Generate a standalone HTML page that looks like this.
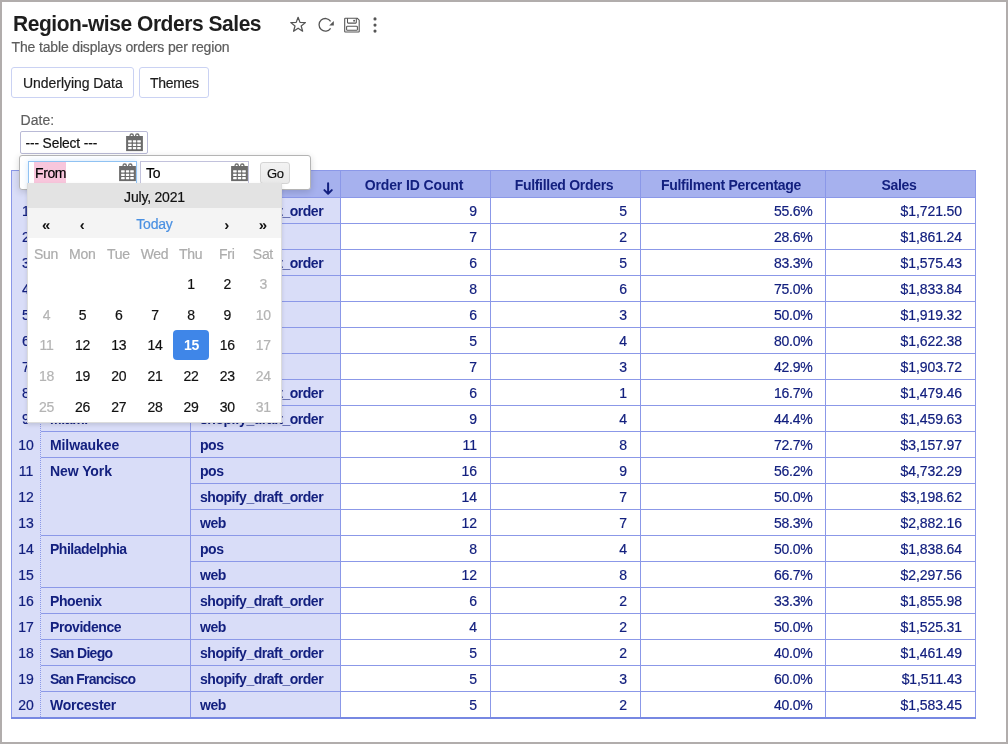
<!DOCTYPE html>
<html><head><meta charset="utf-8"><style>
html,body{margin:0;padding:0;}
body{width:1008px;height:744px;position:relative;overflow:hidden;background:#fff;font-family:"Liberation Sans", sans-serif;}
.t{position:absolute;white-space:nowrap;}
.n{-webkit-text-stroke:0.2px currentColor;}
.r{position:absolute;}
#wrap{position:absolute;left:0;top:0;width:1008px;height:744px;will-change:transform;}
#frame{position:absolute;left:0;top:0;width:1008px;height:744px;box-sizing:border-box;border:2px solid #b1adac;pointer-events:none;z-index:99;}
</style></head><body>
<div id="wrap">
<div class="r" style="left:11px;top:170px;width:964px;height:547px;background:#fff;"></div>
<div class="r" style="left:11px;top:170px;width:179px;height:547px;background:#d9ddf8;"></div>
<div class="r" style="left:190px;top:197px;width:150px;height:520px;background:#d9ddf8;"></div>
<div class="r" style="left:40px;top:170px;width:935px;height:27px;background:#a6b1ee;"></div>
<div class="r" style="left:11px;top:170px;width:965px;height:1px;background:#8b98e8;"></div>
<div class="r" style="left:41px;top:197px;width:935px;height:1px;background:#8b98e8;"></div>
<div class="r" style="left:41px;top:223px;width:935px;height:1px;background:#8b98e8;"></div>
<div class="r" style="left:41px;top:249px;width:935px;height:1px;background:#8b98e8;"></div>
<div class="r" style="left:41px;top:275px;width:935px;height:1px;background:#8b98e8;"></div>
<div class="r" style="left:41px;top:301px;width:935px;height:1px;background:#8b98e8;"></div>
<div class="r" style="left:41px;top:327px;width:935px;height:1px;background:#8b98e8;"></div>
<div class="r" style="left:41px;top:353px;width:935px;height:1px;background:#8b98e8;"></div>
<div class="r" style="left:41px;top:379px;width:935px;height:1px;background:#8b98e8;"></div>
<div class="r" style="left:41px;top:405px;width:935px;height:1px;background:#8b98e8;"></div>
<div class="r" style="left:41px;top:431px;width:935px;height:1px;background:#8b98e8;"></div>
<div class="r" style="left:41px;top:457px;width:935px;height:1px;background:#8b98e8;"></div>
<div class="r" style="left:190px;top:483px;width:786px;height:1px;background:#8b98e8;"></div>
<div class="r" style="left:190px;top:509px;width:786px;height:1px;background:#8b98e8;"></div>
<div class="r" style="left:41px;top:535px;width:935px;height:1px;background:#8b98e8;"></div>
<div class="r" style="left:190px;top:561px;width:786px;height:1px;background:#8b98e8;"></div>
<div class="r" style="left:41px;top:587px;width:935px;height:1px;background:#8b98e8;"></div>
<div class="r" style="left:41px;top:613px;width:935px;height:1px;background:#8b98e8;"></div>
<div class="r" style="left:41px;top:639px;width:935px;height:1px;background:#8b98e8;"></div>
<div class="r" style="left:41px;top:665px;width:935px;height:1px;background:#8b98e8;"></div>
<div class="r" style="left:41px;top:691px;width:935px;height:1px;background:#8b98e8;"></div>
<div class="r" style="left:11px;top:717px;width:965px;height:2px;background:#7788e2;"></div>
<div class="r" style="left:11px;top:170px;width:1px;height:547px;background:#8b98e8;"></div>
<div class="r" style="left:975px;top:170px;width:1px;height:547px;background:#8b98e8;"></div>
<div class="r" style="left:190px;top:170px;width:1px;height:547px;background:#8b98e8;"></div>
<div class="r" style="left:340px;top:170px;width:1px;height:547px;background:#8b98e8;"></div>
<div class="r" style="left:490px;top:170px;width:1px;height:547px;background:#8b98e8;"></div>
<div class="r" style="left:640px;top:170px;width:1px;height:547px;background:#8b98e8;"></div>
<div class="r" style="left:825px;top:170px;width:1px;height:547px;background:#8b98e8;"></div>
<div class="r" style="left:40px;top:170px;width:0;height:547px;border-left:1px dotted #8b98e8;"></div>
<div class="t" style="left:339.5px;top:178.15px;font-size:14px;line-height:14px;color:#13207f;font-weight:bold;letter-spacing:-0.12px;width:149px;text-align:center;">Order ID Count</div>
<div class="t" style="left:489.5px;top:178.15px;font-size:14px;line-height:14px;color:#13207f;font-weight:bold;letter-spacing:-0.3px;width:149px;text-align:center;">Fulfilled Orders</div>
<div class="t" style="left:639px;top:178.15px;font-size:14px;line-height:14px;color:#13207f;font-weight:bold;letter-spacing:-0.3px;width:184px;text-align:center;">Fulfilment Percentage</div>
<div class="t" style="left:824.5px;top:178.15px;font-size:14px;line-height:14px;color:#13207f;font-weight:bold;letter-spacing:-0.3px;width:149px;text-align:center;">Sales</div>
<svg class="r" style="left:322px;top:181px" width="12" height="15" viewBox="0 0 12 15"><path d="M6.1 2.2V12.6M2.4 9.1L6.1 12.7L9.8 9.1" fill="none" stroke="#13207f" stroke-width="2" stroke-linecap="round" stroke-linejoin="round"/></svg>
<div class="t n" style="left:12px;top:204.15px;font-size:14px;line-height:14px;color:#13207f;width:28px;text-align:center;">1</div>
<div class="t" style="left:50px;top:204.15px;font-size:14px;line-height:14px;color:#13207f;font-weight:bold;letter-spacing:-0.4px;">Arlington</div>
<div class="t" style="left:200px;top:204.15px;font-size:14px;line-height:14px;color:#13207f;font-weight:bold;letter-spacing:-0.48px;">shopify_draft_order</div>
<div class="t n" style="left:342px;top:204.15px;font-size:14px;line-height:14px;color:#13207f;width:135px;text-align:right;">9</div>
<div class="t n" style="left:492px;top:204.15px;font-size:14px;line-height:14px;color:#13207f;width:135px;text-align:right;">5</div>
<div class="t n" style="left:641.5px;top:204.15px;font-size:14px;line-height:14px;color:#13207f;letter-spacing:-0.25px;width:171px;text-align:right;">55.6%</div>
<div class="t n" style="left:827px;top:204.15px;font-size:14px;line-height:14px;color:#13207f;letter-spacing:-0.1px;width:135px;text-align:right;">$1,721.50</div>
<div class="t n" style="left:12px;top:230.15px;font-size:14px;line-height:14px;color:#13207f;width:28px;text-align:center;">2</div>
<div class="t" style="left:50px;top:230.15px;font-size:14px;line-height:14px;color:#13207f;font-weight:bold;letter-spacing:-0.4px;">Atlanta</div>
<div class="t" style="left:200px;top:230.15px;font-size:14px;line-height:14px;color:#13207f;font-weight:bold;letter-spacing:-0.45px;">pos</div>
<div class="t n" style="left:342px;top:230.15px;font-size:14px;line-height:14px;color:#13207f;width:135px;text-align:right;">7</div>
<div class="t n" style="left:492px;top:230.15px;font-size:14px;line-height:14px;color:#13207f;width:135px;text-align:right;">2</div>
<div class="t n" style="left:641.5px;top:230.15px;font-size:14px;line-height:14px;color:#13207f;letter-spacing:-0.25px;width:171px;text-align:right;">28.6%</div>
<div class="t n" style="left:827px;top:230.15px;font-size:14px;line-height:14px;color:#13207f;letter-spacing:-0.1px;width:135px;text-align:right;">$1,861.24</div>
<div class="t n" style="left:12px;top:256.15px;font-size:14px;line-height:14px;color:#13207f;width:28px;text-align:center;">3</div>
<div class="t" style="left:50px;top:256.15px;font-size:14px;line-height:14px;color:#13207f;font-weight:bold;letter-spacing:-0.4px;">Austin</div>
<div class="t" style="left:200px;top:256.15px;font-size:14px;line-height:14px;color:#13207f;font-weight:bold;letter-spacing:-0.48px;">shopify_draft_order</div>
<div class="t n" style="left:342px;top:256.15px;font-size:14px;line-height:14px;color:#13207f;width:135px;text-align:right;">6</div>
<div class="t n" style="left:492px;top:256.15px;font-size:14px;line-height:14px;color:#13207f;width:135px;text-align:right;">5</div>
<div class="t n" style="left:641.5px;top:256.15px;font-size:14px;line-height:14px;color:#13207f;letter-spacing:-0.25px;width:171px;text-align:right;">83.3%</div>
<div class="t n" style="left:827px;top:256.15px;font-size:14px;line-height:14px;color:#13207f;letter-spacing:-0.1px;width:135px;text-align:right;">$1,575.43</div>
<div class="t n" style="left:12px;top:282.15px;font-size:14px;line-height:14px;color:#13207f;width:28px;text-align:center;">4</div>
<div class="t" style="left:50px;top:282.15px;font-size:14px;line-height:14px;color:#13207f;font-weight:bold;letter-spacing:-0.4px;">Boston</div>
<div class="t" style="left:200px;top:282.15px;font-size:14px;line-height:14px;color:#13207f;font-weight:bold;letter-spacing:-0.5px;">web</div>
<div class="t n" style="left:342px;top:282.15px;font-size:14px;line-height:14px;color:#13207f;width:135px;text-align:right;">8</div>
<div class="t n" style="left:492px;top:282.15px;font-size:14px;line-height:14px;color:#13207f;width:135px;text-align:right;">6</div>
<div class="t n" style="left:641.5px;top:282.15px;font-size:14px;line-height:14px;color:#13207f;letter-spacing:-0.25px;width:171px;text-align:right;">75.0%</div>
<div class="t n" style="left:827px;top:282.15px;font-size:14px;line-height:14px;color:#13207f;letter-spacing:-0.1px;width:135px;text-align:right;">$1,833.84</div>
<div class="t n" style="left:12px;top:308.15px;font-size:14px;line-height:14px;color:#13207f;width:28px;text-align:center;">5</div>
<div class="t" style="left:50px;top:308.15px;font-size:14px;line-height:14px;color:#13207f;font-weight:bold;letter-spacing:-0.4px;">Chicago</div>
<div class="t" style="left:200px;top:308.15px;font-size:14px;line-height:14px;color:#13207f;font-weight:bold;letter-spacing:-0.45px;">pos</div>
<div class="t n" style="left:342px;top:308.15px;font-size:14px;line-height:14px;color:#13207f;width:135px;text-align:right;">6</div>
<div class="t n" style="left:492px;top:308.15px;font-size:14px;line-height:14px;color:#13207f;width:135px;text-align:right;">3</div>
<div class="t n" style="left:641.5px;top:308.15px;font-size:14px;line-height:14px;color:#13207f;letter-spacing:-0.25px;width:171px;text-align:right;">50.0%</div>
<div class="t n" style="left:827px;top:308.15px;font-size:14px;line-height:14px;color:#13207f;letter-spacing:-0.1px;width:135px;text-align:right;">$1,919.32</div>
<div class="t n" style="left:12px;top:334.15px;font-size:14px;line-height:14px;color:#13207f;width:28px;text-align:center;">6</div>
<div class="t" style="left:50px;top:334.15px;font-size:14px;line-height:14px;color:#13207f;font-weight:bold;letter-spacing:-0.4px;">Dallas</div>
<div class="t" style="left:200px;top:334.15px;font-size:14px;line-height:14px;color:#13207f;font-weight:bold;letter-spacing:-0.5px;">web</div>
<div class="t n" style="left:342px;top:334.15px;font-size:14px;line-height:14px;color:#13207f;width:135px;text-align:right;">5</div>
<div class="t n" style="left:492px;top:334.15px;font-size:14px;line-height:14px;color:#13207f;width:135px;text-align:right;">4</div>
<div class="t n" style="left:641.5px;top:334.15px;font-size:14px;line-height:14px;color:#13207f;letter-spacing:-0.25px;width:171px;text-align:right;">80.0%</div>
<div class="t n" style="left:827px;top:334.15px;font-size:14px;line-height:14px;color:#13207f;letter-spacing:-0.1px;width:135px;text-align:right;">$1,622.38</div>
<div class="t n" style="left:12px;top:360.15px;font-size:14px;line-height:14px;color:#13207f;width:28px;text-align:center;">7</div>
<div class="t" style="left:50px;top:360.15px;font-size:14px;line-height:14px;color:#13207f;font-weight:bold;letter-spacing:-0.4px;">Denver</div>
<div class="t" style="left:200px;top:360.15px;font-size:14px;line-height:14px;color:#13207f;font-weight:bold;letter-spacing:-0.45px;">pos</div>
<div class="t n" style="left:342px;top:360.15px;font-size:14px;line-height:14px;color:#13207f;width:135px;text-align:right;">7</div>
<div class="t n" style="left:492px;top:360.15px;font-size:14px;line-height:14px;color:#13207f;width:135px;text-align:right;">3</div>
<div class="t n" style="left:641.5px;top:360.15px;font-size:14px;line-height:14px;color:#13207f;letter-spacing:-0.25px;width:171px;text-align:right;">42.9%</div>
<div class="t n" style="left:827px;top:360.15px;font-size:14px;line-height:14px;color:#13207f;letter-spacing:-0.1px;width:135px;text-align:right;">$1,903.72</div>
<div class="t n" style="left:12px;top:386.15px;font-size:14px;line-height:14px;color:#13207f;width:28px;text-align:center;">8</div>
<div class="t" style="left:50px;top:386.15px;font-size:14px;line-height:14px;color:#13207f;font-weight:bold;letter-spacing:-0.4px;">Houston</div>
<div class="t" style="left:200px;top:386.15px;font-size:14px;line-height:14px;color:#13207f;font-weight:bold;letter-spacing:-0.48px;">shopify_draft_order</div>
<div class="t n" style="left:342px;top:386.15px;font-size:14px;line-height:14px;color:#13207f;width:135px;text-align:right;">6</div>
<div class="t n" style="left:492px;top:386.15px;font-size:14px;line-height:14px;color:#13207f;width:135px;text-align:right;">1</div>
<div class="t n" style="left:641.5px;top:386.15px;font-size:14px;line-height:14px;color:#13207f;letter-spacing:-0.25px;width:171px;text-align:right;">16.7%</div>
<div class="t n" style="left:827px;top:386.15px;font-size:14px;line-height:14px;color:#13207f;letter-spacing:-0.1px;width:135px;text-align:right;">$1,479.46</div>
<div class="t n" style="left:12px;top:412.15px;font-size:14px;line-height:14px;color:#13207f;width:28px;text-align:center;">9</div>
<div class="t" style="left:50px;top:412.15px;font-size:14px;line-height:14px;color:#13207f;font-weight:bold;letter-spacing:-0.4px;">Miami</div>
<div class="t" style="left:200px;top:412.15px;font-size:14px;line-height:14px;color:#13207f;font-weight:bold;letter-spacing:-0.48px;">shopify_draft_order</div>
<div class="t n" style="left:342px;top:412.15px;font-size:14px;line-height:14px;color:#13207f;width:135px;text-align:right;">9</div>
<div class="t n" style="left:492px;top:412.15px;font-size:14px;line-height:14px;color:#13207f;width:135px;text-align:right;">4</div>
<div class="t n" style="left:641.5px;top:412.15px;font-size:14px;line-height:14px;color:#13207f;letter-spacing:-0.25px;width:171px;text-align:right;">44.4%</div>
<div class="t n" style="left:827px;top:412.15px;font-size:14px;line-height:14px;color:#13207f;letter-spacing:-0.1px;width:135px;text-align:right;">$1,459.63</div>
<div class="t n" style="left:12px;top:438.15px;font-size:14px;line-height:14px;color:#13207f;width:28px;text-align:center;">10</div>
<div class="t" style="left:50px;top:438.15px;font-size:14px;line-height:14px;color:#13207f;font-weight:bold;letter-spacing:-0.1px;">Milwaukee</div>
<div class="t" style="left:200px;top:438.15px;font-size:14px;line-height:14px;color:#13207f;font-weight:bold;letter-spacing:-0.45px;">pos</div>
<div class="t n" style="left:342px;top:438.15px;font-size:14px;line-height:14px;color:#13207f;width:135px;text-align:right;">11</div>
<div class="t n" style="left:492px;top:438.15px;font-size:14px;line-height:14px;color:#13207f;width:135px;text-align:right;">8</div>
<div class="t n" style="left:641.5px;top:438.15px;font-size:14px;line-height:14px;color:#13207f;letter-spacing:-0.25px;width:171px;text-align:right;">72.7%</div>
<div class="t n" style="left:827px;top:438.15px;font-size:14px;line-height:14px;color:#13207f;letter-spacing:-0.1px;width:135px;text-align:right;">$3,157.97</div>
<div class="t n" style="left:12px;top:464.15px;font-size:14px;line-height:14px;color:#13207f;width:28px;text-align:center;">11</div>
<div class="t" style="left:50px;top:464.15px;font-size:14px;line-height:14px;color:#13207f;font-weight:bold;letter-spacing:-0.07px;">New York</div>
<div class="t" style="left:200px;top:464.15px;font-size:14px;line-height:14px;color:#13207f;font-weight:bold;letter-spacing:-0.45px;">pos</div>
<div class="t n" style="left:342px;top:464.15px;font-size:14px;line-height:14px;color:#13207f;width:135px;text-align:right;">16</div>
<div class="t n" style="left:492px;top:464.15px;font-size:14px;line-height:14px;color:#13207f;width:135px;text-align:right;">9</div>
<div class="t n" style="left:641.5px;top:464.15px;font-size:14px;line-height:14px;color:#13207f;letter-spacing:-0.25px;width:171px;text-align:right;">56.2%</div>
<div class="t n" style="left:827px;top:464.15px;font-size:14px;line-height:14px;color:#13207f;letter-spacing:-0.1px;width:135px;text-align:right;">$4,732.29</div>
<div class="t n" style="left:12px;top:490.15px;font-size:14px;line-height:14px;color:#13207f;width:28px;text-align:center;">12</div>
<div class="t" style="left:200px;top:490.15px;font-size:14px;line-height:14px;color:#13207f;font-weight:bold;letter-spacing:-0.48px;">shopify_draft_order</div>
<div class="t n" style="left:342px;top:490.15px;font-size:14px;line-height:14px;color:#13207f;width:135px;text-align:right;">14</div>
<div class="t n" style="left:492px;top:490.15px;font-size:14px;line-height:14px;color:#13207f;width:135px;text-align:right;">7</div>
<div class="t n" style="left:641.5px;top:490.15px;font-size:14px;line-height:14px;color:#13207f;letter-spacing:-0.25px;width:171px;text-align:right;">50.0%</div>
<div class="t n" style="left:827px;top:490.15px;font-size:14px;line-height:14px;color:#13207f;letter-spacing:-0.1px;width:135px;text-align:right;">$3,198.62</div>
<div class="t n" style="left:12px;top:516.15px;font-size:14px;line-height:14px;color:#13207f;width:28px;text-align:center;">13</div>
<div class="t" style="left:200px;top:516.15px;font-size:14px;line-height:14px;color:#13207f;font-weight:bold;letter-spacing:-0.5px;">web</div>
<div class="t n" style="left:342px;top:516.15px;font-size:14px;line-height:14px;color:#13207f;width:135px;text-align:right;">12</div>
<div class="t n" style="left:492px;top:516.15px;font-size:14px;line-height:14px;color:#13207f;width:135px;text-align:right;">7</div>
<div class="t n" style="left:641.5px;top:516.15px;font-size:14px;line-height:14px;color:#13207f;letter-spacing:-0.25px;width:171px;text-align:right;">58.3%</div>
<div class="t n" style="left:827px;top:516.15px;font-size:14px;line-height:14px;color:#13207f;letter-spacing:-0.1px;width:135px;text-align:right;">$2,882.16</div>
<div class="t n" style="left:12px;top:542.15px;font-size:14px;line-height:14px;color:#13207f;width:28px;text-align:center;">14</div>
<div class="t" style="left:50px;top:542.15px;font-size:14px;line-height:14px;color:#13207f;font-weight:bold;letter-spacing:-0.49px;">Philadelphia</div>
<div class="t" style="left:200px;top:542.15px;font-size:14px;line-height:14px;color:#13207f;font-weight:bold;letter-spacing:-0.45px;">pos</div>
<div class="t n" style="left:342px;top:542.15px;font-size:14px;line-height:14px;color:#13207f;width:135px;text-align:right;">8</div>
<div class="t n" style="left:492px;top:542.15px;font-size:14px;line-height:14px;color:#13207f;width:135px;text-align:right;">4</div>
<div class="t n" style="left:641.5px;top:542.15px;font-size:14px;line-height:14px;color:#13207f;letter-spacing:-0.25px;width:171px;text-align:right;">50.0%</div>
<div class="t n" style="left:827px;top:542.15px;font-size:14px;line-height:14px;color:#13207f;letter-spacing:-0.1px;width:135px;text-align:right;">$1,838.64</div>
<div class="t n" style="left:12px;top:568.15px;font-size:14px;line-height:14px;color:#13207f;width:28px;text-align:center;">15</div>
<div class="t" style="left:200px;top:568.15px;font-size:14px;line-height:14px;color:#13207f;font-weight:bold;letter-spacing:-0.5px;">web</div>
<div class="t n" style="left:342px;top:568.15px;font-size:14px;line-height:14px;color:#13207f;width:135px;text-align:right;">12</div>
<div class="t n" style="left:492px;top:568.15px;font-size:14px;line-height:14px;color:#13207f;width:135px;text-align:right;">8</div>
<div class="t n" style="left:641.5px;top:568.15px;font-size:14px;line-height:14px;color:#13207f;letter-spacing:-0.25px;width:171px;text-align:right;">66.7%</div>
<div class="t n" style="left:827px;top:568.15px;font-size:14px;line-height:14px;color:#13207f;letter-spacing:-0.1px;width:135px;text-align:right;">$2,297.56</div>
<div class="t n" style="left:12px;top:594.15px;font-size:14px;line-height:14px;color:#13207f;width:28px;text-align:center;">16</div>
<div class="t" style="left:50px;top:594.15px;font-size:14px;line-height:14px;color:#13207f;font-weight:bold;letter-spacing:-0.4px;">Phoenix</div>
<div class="t" style="left:200px;top:594.15px;font-size:14px;line-height:14px;color:#13207f;font-weight:bold;letter-spacing:-0.48px;">shopify_draft_order</div>
<div class="t n" style="left:342px;top:594.15px;font-size:14px;line-height:14px;color:#13207f;width:135px;text-align:right;">6</div>
<div class="t n" style="left:492px;top:594.15px;font-size:14px;line-height:14px;color:#13207f;width:135px;text-align:right;">2</div>
<div class="t n" style="left:641.5px;top:594.15px;font-size:14px;line-height:14px;color:#13207f;letter-spacing:-0.25px;width:171px;text-align:right;">33.3%</div>
<div class="t n" style="left:827px;top:594.15px;font-size:14px;line-height:14px;color:#13207f;letter-spacing:-0.1px;width:135px;text-align:right;">$1,855.98</div>
<div class="t n" style="left:12px;top:620.15px;font-size:14px;line-height:14px;color:#13207f;width:28px;text-align:center;">17</div>
<div class="t" style="left:50px;top:620.15px;font-size:14px;line-height:14px;color:#13207f;font-weight:bold;letter-spacing:-0.43px;">Providence</div>
<div class="t" style="left:200px;top:620.15px;font-size:14px;line-height:14px;color:#13207f;font-weight:bold;letter-spacing:-0.5px;">web</div>
<div class="t n" style="left:342px;top:620.15px;font-size:14px;line-height:14px;color:#13207f;width:135px;text-align:right;">4</div>
<div class="t n" style="left:492px;top:620.15px;font-size:14px;line-height:14px;color:#13207f;width:135px;text-align:right;">2</div>
<div class="t n" style="left:641.5px;top:620.15px;font-size:14px;line-height:14px;color:#13207f;letter-spacing:-0.25px;width:171px;text-align:right;">50.0%</div>
<div class="t n" style="left:827px;top:620.15px;font-size:14px;line-height:14px;color:#13207f;letter-spacing:-0.1px;width:135px;text-align:right;">$1,525.31</div>
<div class="t n" style="left:12px;top:646.15px;font-size:14px;line-height:14px;color:#13207f;width:28px;text-align:center;">18</div>
<div class="t" style="left:50px;top:646.15px;font-size:14px;line-height:14px;color:#13207f;font-weight:bold;letter-spacing:-0.66px;">San Diego</div>
<div class="t" style="left:200px;top:646.15px;font-size:14px;line-height:14px;color:#13207f;font-weight:bold;letter-spacing:-0.48px;">shopify_draft_order</div>
<div class="t n" style="left:342px;top:646.15px;font-size:14px;line-height:14px;color:#13207f;width:135px;text-align:right;">5</div>
<div class="t n" style="left:492px;top:646.15px;font-size:14px;line-height:14px;color:#13207f;width:135px;text-align:right;">2</div>
<div class="t n" style="left:641.5px;top:646.15px;font-size:14px;line-height:14px;color:#13207f;letter-spacing:-0.25px;width:171px;text-align:right;">40.0%</div>
<div class="t n" style="left:827px;top:646.15px;font-size:14px;line-height:14px;color:#13207f;letter-spacing:-0.1px;width:135px;text-align:right;">$1,461.49</div>
<div class="t n" style="left:12px;top:672.15px;font-size:14px;line-height:14px;color:#13207f;width:28px;text-align:center;">19</div>
<div class="t" style="left:50px;top:672.15px;font-size:14px;line-height:14px;color:#13207f;font-weight:bold;letter-spacing:-0.8px;">San Francisco</div>
<div class="t" style="left:200px;top:672.15px;font-size:14px;line-height:14px;color:#13207f;font-weight:bold;letter-spacing:-0.48px;">shopify_draft_order</div>
<div class="t n" style="left:342px;top:672.15px;font-size:14px;line-height:14px;color:#13207f;width:135px;text-align:right;">5</div>
<div class="t n" style="left:492px;top:672.15px;font-size:14px;line-height:14px;color:#13207f;width:135px;text-align:right;">3</div>
<div class="t n" style="left:641.5px;top:672.15px;font-size:14px;line-height:14px;color:#13207f;letter-spacing:-0.25px;width:171px;text-align:right;">60.0%</div>
<div class="t n" style="left:827px;top:672.15px;font-size:14px;line-height:14px;color:#13207f;letter-spacing:-0.1px;width:135px;text-align:right;">$1,511.43</div>
<div class="t n" style="left:12px;top:698.15px;font-size:14px;line-height:14px;color:#13207f;width:28px;text-align:center;">20</div>
<div class="t" style="left:50px;top:698.15px;font-size:14px;line-height:14px;color:#13207f;font-weight:bold;letter-spacing:-0.24px;">Worcester</div>
<div class="t" style="left:200px;top:698.15px;font-size:14px;line-height:14px;color:#13207f;font-weight:bold;letter-spacing:-0.5px;">web</div>
<div class="t n" style="left:342px;top:698.15px;font-size:14px;line-height:14px;color:#13207f;width:135px;text-align:right;">5</div>
<div class="t n" style="left:492px;top:698.15px;font-size:14px;line-height:14px;color:#13207f;width:135px;text-align:right;">2</div>
<div class="t n" style="left:641.5px;top:698.15px;font-size:14px;line-height:14px;color:#13207f;letter-spacing:-0.25px;width:171px;text-align:right;">40.0%</div>
<div class="t n" style="left:827px;top:698.15px;font-size:14px;line-height:14px;color:#13207f;letter-spacing:-0.1px;width:135px;text-align:right;">$1,583.45</div>
<div class="t" style="left:13.2px;top:12.87px;font-size:22.6px;line-height:22.6px;color:#1e1e1e;font-weight:bold;letter-spacing:-0.5px;transform:scaleX(0.93);transform-origin:0 0;">Region-wise Orders Sales</div>
<div class="t n" style="left:11.5px;top:40.15px;font-size:14px;line-height:14px;color:#5c5c5c;letter-spacing:-0.15px;">The table displays orders per region</div>
<svg class="r" style="left:288px;top:15px" width="20" height="19" viewBox="288 15 20 19"><path d="M298.10 17.30 L300.00 22.38 L305.42 22.62 L301.18 26.00 L302.63 31.23 L298.10 28.23 L293.57 31.23 L295.02 26.00 L290.78 22.62 L296.20 22.38 Z" fill="none" stroke="#555" stroke-width="1.25" stroke-linejoin="round"/></svg>
<svg class="r" style="left:316px;top:15px" width="20" height="19" viewBox="316 15 20 19"><path d="M330.6 21.3 A6.3 6.3 0 1 0 330.6 28.3" fill="none" stroke="#555" stroke-width="1.3"/><path d="M333.8 21 L333.8 25.6 L329.2 25.6 Z" fill="#555"/></svg>
<svg class="r" style="left:342px;top:15px" width="20" height="20" viewBox="342 15 20 20"><path d="M345.3 18.3 H357.3 L359.2 20.2 V31.4 Q359.2 32 358.6 32 H345.3 Q344.7 32 344.7 31.4 V18.9 Q344.7 18.3 345.3 18.3 Z" fill="none" stroke="#555" stroke-width="1.1"/><path d="M347.5 18.3 V22.5 Q347.5 23.1 348.1 23.1 H355.7 Q356.3 23.1 356.3 22.5 V18.3" fill="none" stroke="#555" stroke-width="1.05"/><rect x="346.6" y="26.3" width="10.8" height="4" rx="0.8" fill="none" stroke="#555" stroke-width="1.05"/><circle cx="354.1" cy="20.7" r="0.95" fill="#555"/></svg>
<svg class="r" style="left:368px;top:14px" width="14" height="22" viewBox="368 14 14 22"><circle cx="375" cy="18.9" r="1.55" fill="#555"/><circle cx="375" cy="25.1" r="1.55" fill="#555"/><circle cx="375" cy="31.1" r="1.55" fill="#555"/></svg>
<div class="r" style="left:11px;top:67px;width:123px;height:31px;border:1px solid #cad2f3;border-radius:3px;box-sizing:border-box;"></div>
<div class="r" style="left:139px;top:67px;width:70px;height:31px;border:1px solid #cad2f3;border-radius:3px;box-sizing:border-box;"></div>
<div class="t n" style="left:23px;top:76.15px;font-size:14px;line-height:14px;color:#1c1c1c;letter-spacing:-0.05px;">Underlying Data</div>
<div class="t n" style="left:150px;top:76.15px;font-size:14px;line-height:14px;color:#1c1c1c;letter-spacing:-0.3px;">Themes</div>
<div class="t n" style="left:20.6px;top:113.15px;font-size:14px;line-height:14px;color:#5e5e5e;">Date:</div>
<div class="r" style="left:20px;top:131px;width:128px;height:23px;border:1px solid #b9bad6;border-radius:2px;box-sizing:border-box;background:#fff;"></div>
<div class="t n" style="left:25.6px;top:136.92px;font-size:13.8px;line-height:13.8px;color:#111;letter-spacing:-0.15px;">--- Select ---</div>
<svg class="r" style="left:126px;top:134px;overflow:visible" width="17" height="18" viewBox="0 0 17 18"><rect x="0.1" y="2" width="16.8" height="15.1" fill="#6b6b6b"/><path d="M4.1 3V1.4Q4.1 0 5.7 0Q7.3 0 7.3 1.4V3M9.7 3V1.4Q9.7 0 11.3 0Q12.9 0 12.9 1.4V3" fill="none" stroke="#6b6b6b" stroke-width="1.3"/><rect x="2.1" y="6.2" width="3.6" height="2.2" rx="0.4" fill="#fff"/><rect x="6.9" y="6.2" width="3.3" height="2.2" rx="0.4" fill="#fff"/><rect x="11.2" y="6.2" width="3.6" height="2.2" rx="0.4" fill="#fff"/><rect x="2.1" y="9.7" width="3.6" height="2.2" rx="0.4" fill="#fff"/><rect x="6.9" y="9.7" width="3.3" height="2.2" rx="0.4" fill="#fff"/><rect x="11.2" y="9.7" width="3.6" height="2.2" rx="0.4" fill="#fff"/><rect x="2.1" y="13.0" width="3.6" height="2.2" rx="0.4" fill="#fff"/><rect x="6.9" y="13.0" width="3.3" height="2.2" rx="0.4" fill="#fff"/><rect x="11.2" y="13.0" width="3.6" height="2.2" rx="0.4" fill="#fff"/></svg>
<div class="r" style="left:19px;top:155px;width:292px;height:35px;background:#fff;border:1px solid #b4b4b4;border-radius:3px;box-sizing:border-box;box-shadow:0 2px 7px rgba(0,0,0,0.16);"></div>
<div class="r" style="left:28px;top:161px;width:109px;height:26px;border:1px solid #90c2f2;box-sizing:border-box;background:#fff;box-shadow:0 0 6px rgba(120,180,240,0.35);"></div>
<div class="r" style="left:34px;top:162px;width:32px;height:24px;background:#f8c6dc;"></div>
<div class="t n" style="left:35px;top:166.15px;font-size:14px;line-height:14px;color:#000;letter-spacing:-0.4px;">From</div>
<svg class="r" style="left:119px;top:164px;overflow:visible" width="17" height="18" viewBox="0 0 17 18"><rect x="0.1" y="2" width="16.8" height="15.1" fill="#6b6b6b"/><path d="M4.1 3V1.4Q4.1 0 5.7 0Q7.3 0 7.3 1.4V3M9.7 3V1.4Q9.7 0 11.3 0Q12.9 0 12.9 1.4V3" fill="none" stroke="#6b6b6b" stroke-width="1.3"/><rect x="2.1" y="6.2" width="3.6" height="2.2" rx="0.4" fill="#fff"/><rect x="6.9" y="6.2" width="3.3" height="2.2" rx="0.4" fill="#fff"/><rect x="11.2" y="6.2" width="3.6" height="2.2" rx="0.4" fill="#fff"/><rect x="2.1" y="9.7" width="3.6" height="2.2" rx="0.4" fill="#fff"/><rect x="6.9" y="9.7" width="3.3" height="2.2" rx="0.4" fill="#fff"/><rect x="11.2" y="9.7" width="3.6" height="2.2" rx="0.4" fill="#fff"/><rect x="2.1" y="13.0" width="3.6" height="2.2" rx="0.4" fill="#fff"/><rect x="6.9" y="13.0" width="3.3" height="2.2" rx="0.4" fill="#fff"/><rect x="11.2" y="13.0" width="3.6" height="2.2" rx="0.4" fill="#fff"/></svg>
<div class="r" style="left:140px;top:161px;width:109px;height:26px;border:1px solid #c2c2dc;box-sizing:border-box;background:#fff;"></div>
<div class="t n" style="left:146px;top:166.15px;font-size:14px;line-height:14px;color:#000;letter-spacing:-0.2px;">To</div>
<svg class="r" style="left:231px;top:164px;overflow:visible" width="17" height="18" viewBox="0 0 17 18"><rect x="0.1" y="2" width="16.8" height="15.1" fill="#6b6b6b"/><path d="M4.1 3V1.4Q4.1 0 5.7 0Q7.3 0 7.3 1.4V3M9.7 3V1.4Q9.7 0 11.3 0Q12.9 0 12.9 1.4V3" fill="none" stroke="#6b6b6b" stroke-width="1.3"/><rect x="2.1" y="6.2" width="3.6" height="2.2" rx="0.4" fill="#fff"/><rect x="6.9" y="6.2" width="3.3" height="2.2" rx="0.4" fill="#fff"/><rect x="11.2" y="6.2" width="3.6" height="2.2" rx="0.4" fill="#fff"/><rect x="2.1" y="9.7" width="3.6" height="2.2" rx="0.4" fill="#fff"/><rect x="6.9" y="9.7" width="3.3" height="2.2" rx="0.4" fill="#fff"/><rect x="11.2" y="9.7" width="3.6" height="2.2" rx="0.4" fill="#fff"/><rect x="2.1" y="13.0" width="3.6" height="2.2" rx="0.4" fill="#fff"/><rect x="6.9" y="13.0" width="3.3" height="2.2" rx="0.4" fill="#fff"/><rect x="11.2" y="13.0" width="3.6" height="2.2" rx="0.4" fill="#fff"/></svg>
<div class="r" style="left:260px;top:162px;width:29.5px;height:22px;background:linear-gradient(#f3f3f3,#e9e9e9);border:1px solid #d4d4d4;border-radius:3px;box-sizing:border-box;"></div>
<div class="t n" style="left:267px;top:167.00px;font-size:13px;line-height:13px;color:#111;letter-spacing:-0.3px;">Go</div>
<div class="r" style="left:27px;top:183px;width:254.5px;height:240px;background:#fff;border:1px solid #dcdcdc;box-sizing:border-box;box-shadow:0 2px 4px rgba(0,0,0,0.12);"></div>
<div class="r" style="left:27.5px;top:183px;width:253.5px;height:25px;background:#e3e3e3;"></div>
<div class="r" style="left:27.5px;top:208px;width:253.5px;height:29.5px;background:#f4f4f4;"></div>
<div class="t n" style="left:28px;top:190.15px;font-size:14px;line-height:14px;color:#111;letter-spacing:-0.2px;width:253px;text-align:center;">July, 2021</div>
<div class="t" style="left:28.0px;top:216.60px;font-size:15px;line-height:15px;color:#111;font-weight:bold;width:36.142857142857146px;text-align:center;">&laquo;</div>
<div class="t" style="left:64.14285714285714px;top:216.60px;font-size:15px;line-height:15px;color:#111;font-weight:bold;width:36.142857142857146px;text-align:center;">&lsaquo;</div>
<div class="t n" style="left:100.28571428571429px;top:217.15px;font-size:14px;line-height:14px;color:#4a90e2;letter-spacing:-0.2px;width:108.42857142857144px;text-align:center;">Today</div>
<div class="t" style="left:208.71428571428572px;top:216.60px;font-size:15px;line-height:15px;color:#111;font-weight:bold;width:36.142857142857146px;text-align:center;">&rsaquo;</div>
<div class="t" style="left:244.8571428571429px;top:216.60px;font-size:15px;line-height:15px;color:#111;font-weight:bold;width:36.142857142857146px;text-align:center;">&raquo;</div>
<div class="t n" style="left:28.0px;top:247.15px;font-size:14px;line-height:14px;color:#acacac;letter-spacing:-0.3px;width:36.142857142857146px;text-align:center;">Sun</div>
<div class="t n" style="left:64.14285714285714px;top:247.15px;font-size:14px;line-height:14px;color:#acacac;letter-spacing:-0.3px;width:36.142857142857146px;text-align:center;">Mon</div>
<div class="t n" style="left:100.28571428571429px;top:247.15px;font-size:14px;line-height:14px;color:#acacac;letter-spacing:-0.3px;width:36.142857142857146px;text-align:center;">Tue</div>
<div class="t n" style="left:136.42857142857144px;top:247.15px;font-size:14px;line-height:14px;color:#acacac;letter-spacing:-0.3px;width:36.142857142857146px;text-align:center;">Wed</div>
<div class="t n" style="left:172.57142857142858px;top:247.15px;font-size:14px;line-height:14px;color:#acacac;letter-spacing:-0.3px;width:36.142857142857146px;text-align:center;">Thu</div>
<div class="t n" style="left:208.71428571428572px;top:247.15px;font-size:14px;line-height:14px;color:#acacac;letter-spacing:-0.3px;width:36.142857142857146px;text-align:center;">Fri</div>
<div class="t n" style="left:244.8571428571429px;top:247.15px;font-size:14px;line-height:14px;color:#acacac;letter-spacing:-0.3px;width:36.142857142857146px;text-align:center;">Sat</div>
<div class="r" style="left:173.3px;top:330.2px;width:35.7px;height:29.6px;background:#3f86e8;border-radius:4px;"></div>
<div class="t n" style="left:172.9714285714286px;top:277.15px;font-size:14px;line-height:14px;color:#111;letter-spacing:-0.3px;width:36.142857142857146px;text-align:center;">1</div>
<div class="t n" style="left:209.11428571428573px;top:277.15px;font-size:14px;line-height:14px;color:#111;letter-spacing:-0.3px;width:36.142857142857146px;text-align:center;">2</div>
<div class="t n" style="left:245.2571428571429px;top:277.15px;font-size:14px;line-height:14px;color:#b4b4b4;letter-spacing:-0.3px;width:36.142857142857146px;text-align:center;">3</div>
<div class="t n" style="left:28.4px;top:308.15px;font-size:14px;line-height:14px;color:#b4b4b4;letter-spacing:-0.3px;width:36.142857142857146px;text-align:center;">4</div>
<div class="t n" style="left:64.54285714285714px;top:308.15px;font-size:14px;line-height:14px;color:#111;letter-spacing:-0.3px;width:36.142857142857146px;text-align:center;">5</div>
<div class="t n" style="left:100.6857142857143px;top:308.15px;font-size:14px;line-height:14px;color:#111;letter-spacing:-0.3px;width:36.142857142857146px;text-align:center;">6</div>
<div class="t n" style="left:136.82857142857145px;top:308.15px;font-size:14px;line-height:14px;color:#111;letter-spacing:-0.3px;width:36.142857142857146px;text-align:center;">7</div>
<div class="t n" style="left:172.9714285714286px;top:308.15px;font-size:14px;line-height:14px;color:#111;letter-spacing:-0.3px;width:36.142857142857146px;text-align:center;">8</div>
<div class="t n" style="left:209.11428571428573px;top:308.15px;font-size:14px;line-height:14px;color:#111;letter-spacing:-0.3px;width:36.142857142857146px;text-align:center;">9</div>
<div class="t n" style="left:245.2571428571429px;top:308.15px;font-size:14px;line-height:14px;color:#b4b4b4;letter-spacing:-0.3px;width:36.142857142857146px;text-align:center;">10</div>
<div class="t n" style="left:28.4px;top:338.15px;font-size:14px;line-height:14px;color:#b4b4b4;letter-spacing:-0.3px;width:36.142857142857146px;text-align:center;">11</div>
<div class="t n" style="left:64.54285714285714px;top:338.15px;font-size:14px;line-height:14px;color:#111;letter-spacing:-0.3px;width:36.142857142857146px;text-align:center;">12</div>
<div class="t n" style="left:100.6857142857143px;top:338.15px;font-size:14px;line-height:14px;color:#111;letter-spacing:-0.3px;width:36.142857142857146px;text-align:center;">13</div>
<div class="t n" style="left:136.82857142857145px;top:338.15px;font-size:14px;line-height:14px;color:#111;letter-spacing:-0.3px;width:36.142857142857146px;text-align:center;">14</div>
<div class="t" style="left:173.3714285714286px;top:338.15px;font-size:14px;line-height:14px;color:#fff;font-weight:bold;letter-spacing:-0.3px;width:36.142857142857146px;text-align:center;">15</div>
<div class="t n" style="left:209.11428571428573px;top:338.15px;font-size:14px;line-height:14px;color:#111;letter-spacing:-0.3px;width:36.142857142857146px;text-align:center;">16</div>
<div class="t n" style="left:245.2571428571429px;top:338.15px;font-size:14px;line-height:14px;color:#b4b4b4;letter-spacing:-0.3px;width:36.142857142857146px;text-align:center;">17</div>
<div class="t n" style="left:28.4px;top:369.15px;font-size:14px;line-height:14px;color:#b4b4b4;letter-spacing:-0.3px;width:36.142857142857146px;text-align:center;">18</div>
<div class="t n" style="left:64.54285714285714px;top:369.15px;font-size:14px;line-height:14px;color:#111;letter-spacing:-0.3px;width:36.142857142857146px;text-align:center;">19</div>
<div class="t n" style="left:100.6857142857143px;top:369.15px;font-size:14px;line-height:14px;color:#111;letter-spacing:-0.3px;width:36.142857142857146px;text-align:center;">20</div>
<div class="t n" style="left:136.82857142857145px;top:369.15px;font-size:14px;line-height:14px;color:#111;letter-spacing:-0.3px;width:36.142857142857146px;text-align:center;">21</div>
<div class="t n" style="left:172.9714285714286px;top:369.15px;font-size:14px;line-height:14px;color:#111;letter-spacing:-0.3px;width:36.142857142857146px;text-align:center;">22</div>
<div class="t n" style="left:209.11428571428573px;top:369.15px;font-size:14px;line-height:14px;color:#111;letter-spacing:-0.3px;width:36.142857142857146px;text-align:center;">23</div>
<div class="t n" style="left:245.2571428571429px;top:369.15px;font-size:14px;line-height:14px;color:#b4b4b4;letter-spacing:-0.3px;width:36.142857142857146px;text-align:center;">24</div>
<div class="t n" style="left:28.4px;top:400.15px;font-size:14px;line-height:14px;color:#b4b4b4;letter-spacing:-0.3px;width:36.142857142857146px;text-align:center;">25</div>
<div class="t n" style="left:64.54285714285714px;top:400.15px;font-size:14px;line-height:14px;color:#111;letter-spacing:-0.3px;width:36.142857142857146px;text-align:center;">26</div>
<div class="t n" style="left:100.6857142857143px;top:400.15px;font-size:14px;line-height:14px;color:#111;letter-spacing:-0.3px;width:36.142857142857146px;text-align:center;">27</div>
<div class="t n" style="left:136.82857142857145px;top:400.15px;font-size:14px;line-height:14px;color:#111;letter-spacing:-0.3px;width:36.142857142857146px;text-align:center;">28</div>
<div class="t n" style="left:172.9714285714286px;top:400.15px;font-size:14px;line-height:14px;color:#111;letter-spacing:-0.3px;width:36.142857142857146px;text-align:center;">29</div>
<div class="t n" style="left:209.11428571428573px;top:400.15px;font-size:14px;line-height:14px;color:#111;letter-spacing:-0.3px;width:36.142857142857146px;text-align:center;">30</div>
<div class="t n" style="left:245.2571428571429px;top:400.15px;font-size:14px;line-height:14px;color:#b4b4b4;letter-spacing:-0.3px;width:36.142857142857146px;text-align:center;">31</div>
</div>
<div id="frame"></div>
</body></html>
